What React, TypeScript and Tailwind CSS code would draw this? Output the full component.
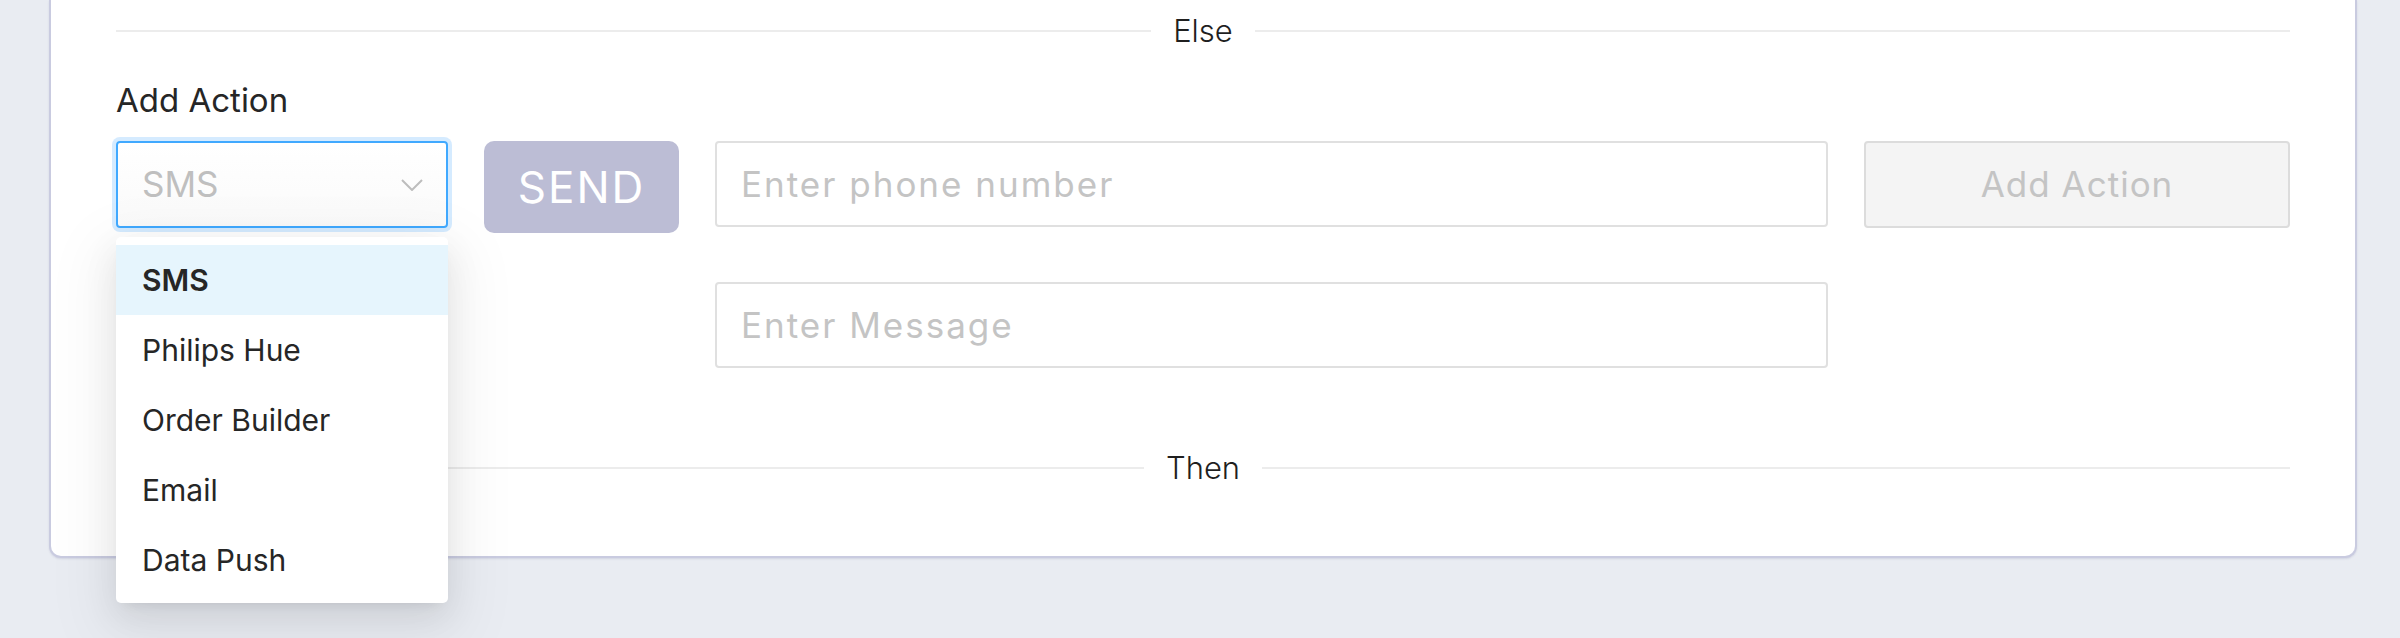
import React from "react";

const geo = { fontFamily: "Inter, 'Noto Sans', sans-serif" };

function Divider({ label }: { label: string }) {
  return (
    <div className="flex h-[40px] items-center">
      <div className="h-[2px] flex-1 bg-[#ececec]" />
      <span className="px-[22px] text-[31px] leading-[40px] font-light text-[#1f1f1f]" style={geo}>
        {label}
      </span>
      <div className="h-[2px] flex-1 bg-[#ececec]" />
    </div>
  );
}

const options = ["SMS", "Philips Hue", "Order Builder", "Email", "Data Push"];

export default function App() {
  return (
    <div className="min-h-[638px] w-[2400px] bg-[#e9ecf2]" style={geo}>
      <div className="ml-[49px] w-[2308px] rounded-b-[12px] border-x-2 border-b-2 border-[#c9cbe0] bg-white px-[65px] pt-[11px] pb-[68px] shadow-[0_1px_2px_rgba(80,80,140,0.15)]">
        <Divider label="Else" />
        <div className="mt-[29px] text-[33px] leading-[40px] text-[#262626]">Add Action</div>
        <div className="mt-[21px] grid grid-cols-[332px_195px_1fr_426px] items-start gap-x-[36px] gap-y-[49px]">
          <div className="relative z-10">
            <div className="flex h-[87px] items-center justify-between rounded-[4px] border-2 border-[#40a9ff] bg-gradient-to-b from-white to-[#fafafa] pl-[24px] pr-[23px] shadow-[0_0_0_4px_rgba(24,144,255,0.18)]">
              <span className="text-[35px] text-[#bfbfbf]">SMS</span>
              <svg width="22" height="12" viewBox="0 0 22 12" fill="none">
                <path d="M1 1l10 10L21 1" stroke="#bdbdbd" strokeWidth="2" />
              </svg>
            </div>
            <div className="absolute left-0 top-[calc(100%+9px)] w-full rounded-[5px] bg-white py-[8px] shadow-[0_7px_13px_-9px_rgba(0,0,0,0.12),0_13px_35px_rgba(0,0,0,0.08),0_20px_61px_18px_rgba(0,0,0,0.05)]">
              {options.map((o, i) => (
                <div
                  key={o}
                  className={
                    "flex h-[70px] items-center pl-[26px] text-[30px] text-[#262626] " +
                    (i === 0 ? "bg-[#e6f5fd] font-semibold" : "")
                  }
                >
                  {o}
                </div>
              ))}
            </div>
          </div>
          <button className="flex h-[92px] items-center justify-center rounded-[10px] bg-[#bcbdd5] text-[44px] tracking-[2px] text-white">
            SEND
          </button>
          <div className="flex h-[86px] items-center rounded-[4px] border-2 border-[#e0e0e0] pl-[24px] text-[35px] tracking-[2px] text-[#c4c4c4]">
            Enter phone number
          </div>
          <button className="flex h-[87px] items-center justify-center rounded-[4px] border-2 border-[#dcdcdc] bg-[#f4f4f4] text-[35px] tracking-[1px] text-[#c4c4c4]">
            Add Action
          </button>
          <div className="col-start-3 flex h-[86px] items-center rounded-[4px] border-2 border-[#e0e0e0] pl-[24px] text-[35px] tracking-[2px] text-[#c4c4c4]">
            Enter Message
          </div>
        </div>
        <div className="mt-[80px]">
          <Divider label="Then" />
        </div>
      </div>
    </div>
  );
}
